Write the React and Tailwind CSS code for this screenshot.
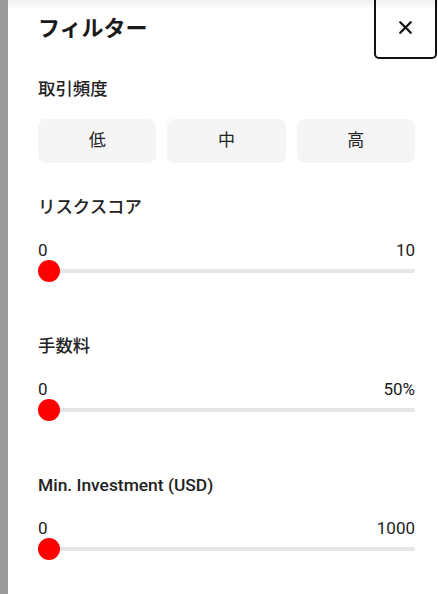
import { X } from "lucide-react";

const sections = [
  { label: "リスクスコア", min: "0", max: "10" },
  { label: "手数料", min: "0", max: "50%" },
  { label: "Min. Investment (USD)", min: "0", max: "1000" },
];

function Slider({ min, max }) {
  return (
    <div>
      <div className="mt-[19px] flex justify-between text-[17px] leading-6 text-[#222]">
        <span>{min}</span>
        <span>{max}</span>
      </div>
      <div className="relative -mt-[2px] flex h-[22px] items-center">
        <div className="h-[4px] w-full rounded-full bg-[#e6e6e6]" />
        <div className="absolute left-0 top-0 h-[22px] w-[22px] rounded-full bg-[#ff0000]" />
      </div>
    </div>
  );
}

export default function App() {
  return (
    <div
      className="relative flex h-[594px] w-[438px] overflow-hidden bg-[#9a9a9a]"
      style={{ fontFamily: "Roboto, 'Noto Sans CJK JP', sans-serif" }}
    >
      <div className="w-[8px] shrink-0 bg-[#9b9b9b]" />
      <div className="relative flex-1 bg-white">
        <div className="pointer-events-none absolute inset-x-0 top-0 z-10 h-[10px] bg-gradient-to-b from-black/[0.06] to-transparent" />

        <div className="flex items-start justify-between pl-[30px]">
          <h2 className="mt-[14px] text-[22px] font-bold leading-[30px] text-[#1a1a1a]">
            フィルター
          </h2>
          <button
            type="button"
            className="-mt-[5px] mr-[1px] flex h-[64px] w-[63px] items-center justify-center rounded-[5px] border-2 border-[#111] bg-white text-[#111]"
          >
            <X className="h-[21px] w-[21px]" strokeWidth={2.6} />
          </button>
        </div>

        <div className="pl-[30px] pr-[23px]">
          <p className="mt-[18px] text-[17.4px] font-medium leading-6 text-[#222]">
            取引頻度
          </p>
          <div className="mt-[18px] grid grid-cols-3 gap-[11px]">
            {["低", "中", "高"].map((t) => (
              <button
                key={t}
                type="button"
                className="h-[44px] rounded-lg bg-[#f5f5f5] text-[17px] text-[#222]"
              >
                {t}
              </button>
            ))}
          </div>

          {sections.map((s, i) => (
            <div key={s.label} className={i === 0 ? "mt-[32px]" : "mt-[52px]"}>
              <p className="text-[17.4px] font-medium leading-6 text-[#222]">
                {s.label}
              </p>
              <Slider min={s.min} max={s.max} />
            </div>
          ))}
        </div>
      </div>
    </div>
  );
}
